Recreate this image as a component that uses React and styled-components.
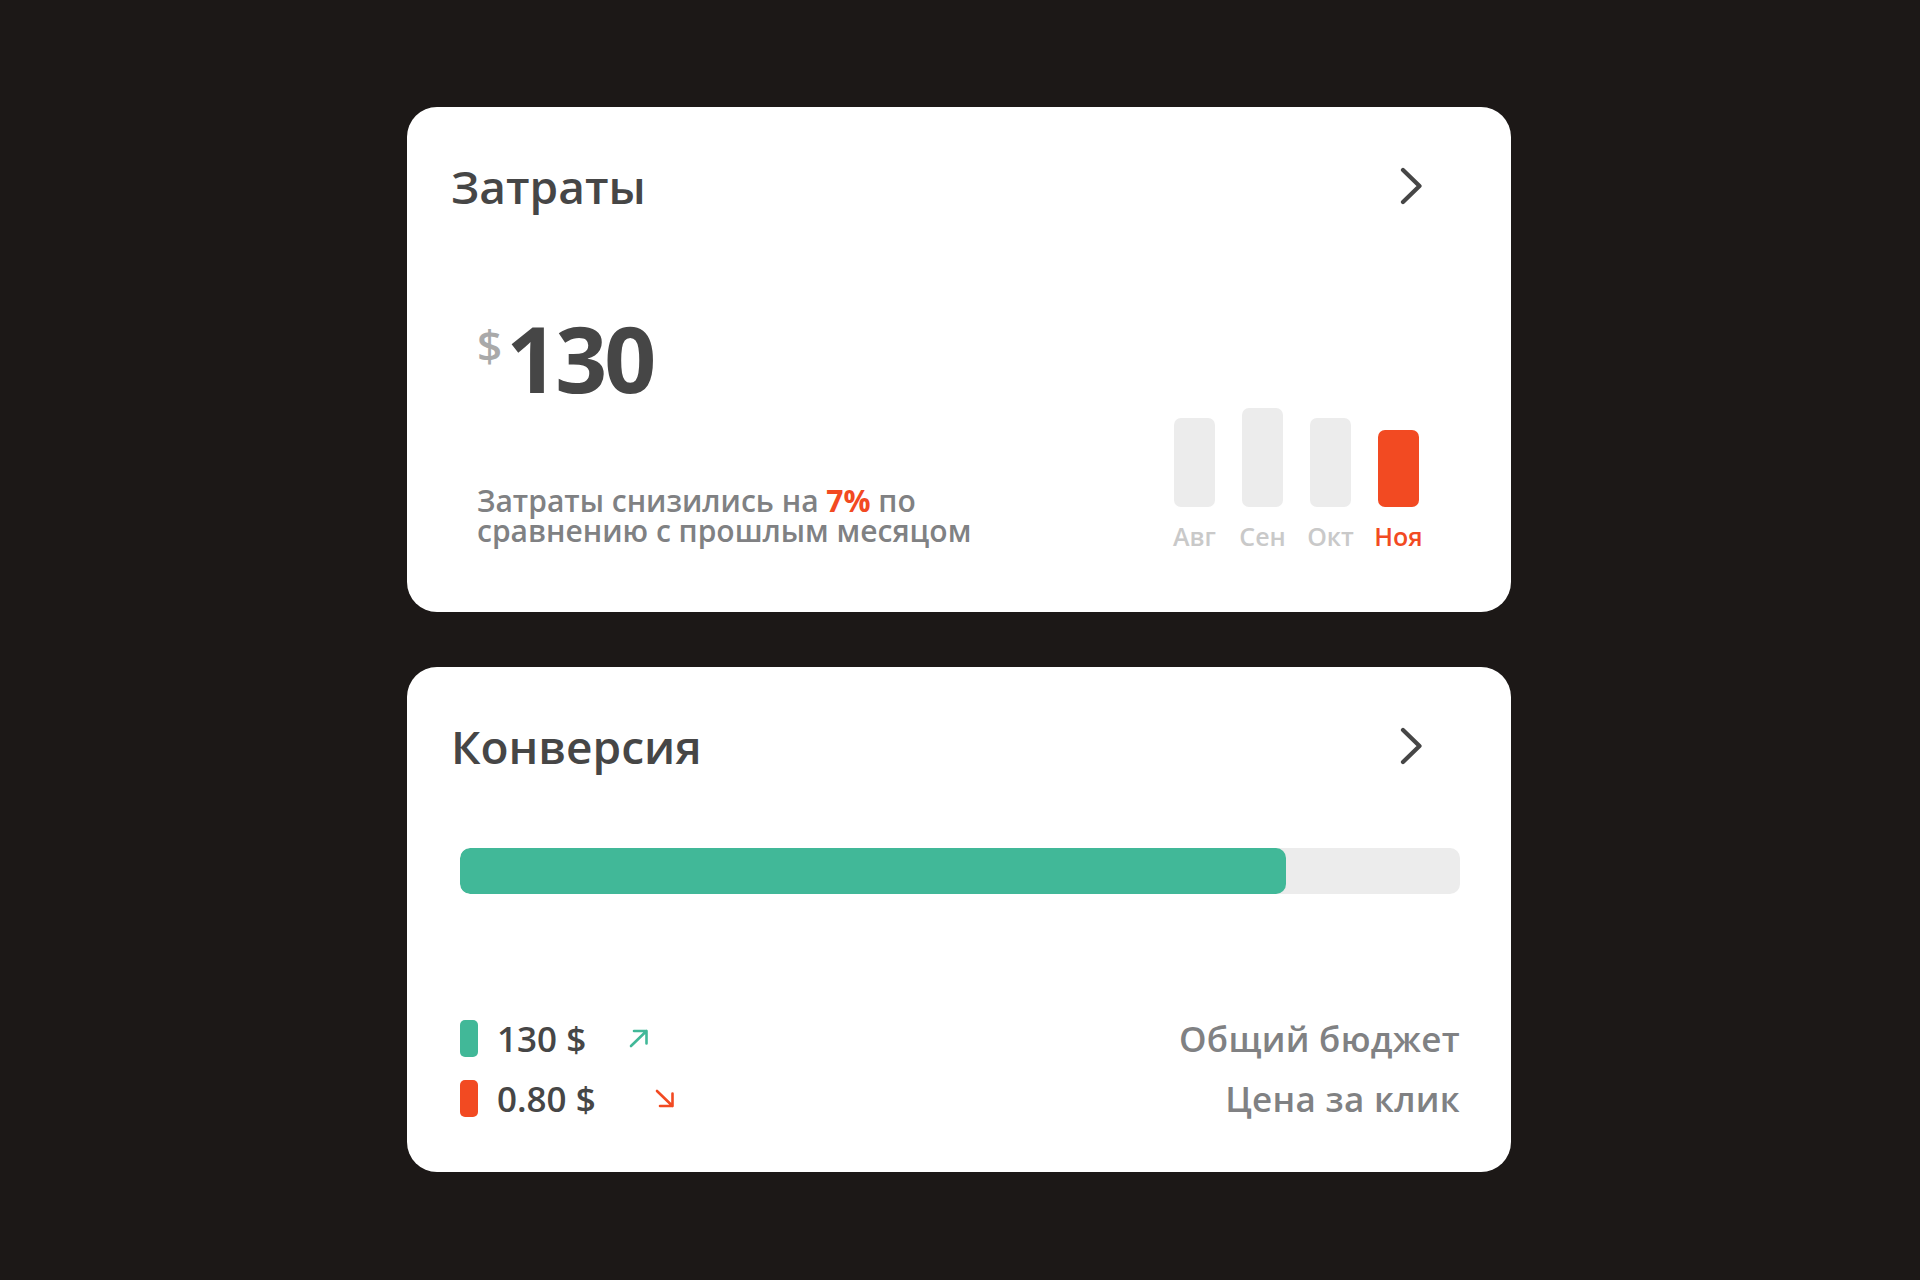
import React from 'react';
import styled, { createGlobalStyle } from 'styled-components';

const colours = {
  page: '#1c1817',
  white: '#ffffff',
  ink: '#464646',
  muted: '#808183',
  faint: '#c9c9c9',
  dollar: '#a9a9a9',
  track: '#ececec',
  green: '#41b898',
  orange: '#f24a22',
};

const GlobalStyle = createGlobalStyle`
  html, body {
    margin: 0;
    padding: 0;
    background: ${ colours.page };
  }

  body {
    font-family: "Open Sans", "Noto Sans", sans-serif;
  }
`;

const Page = styled.div`
  min-height: 1280px;
  display: flex;
  flex-direction: column;
  align-items: center;
  padding-top: 107px;
  padding-right: 2px;
  gap: 55px;
  box-sizing: border-box;
`;

const Card = styled.section`
  width: 1104px;
  height: 505px;
  box-sizing: border-box;
  background: ${ colours.white };
  border-radius: 30px;
  padding: 52px 51px 0 44px;
  display: flex;
  flex-direction: column;
`;

const Header = styled.header`
  display: flex;
  align-items: center;
  justify-content: space-between;
  padding-right: 38px;
`;

const Title = styled.h2`
  margin: 0;
  font-size: 46px;
  line-height: 54px;
  font-weight: 600;
  color: ${ colours.ink };
`;

const Chevron = () => (
  <svg width="22" height="38" viewBox="0 0 22 38" fill="none">
    <path d="M3 3 L19.5 19 L3 35" stroke={ colours.ink } strokeWidth="4.2" strokeLinecap="round" strokeLinejoin="round" />
  </svg>
);

const SpendBody = styled.div`
  display: flex;
  justify-content: space-between;
  align-items: flex-end;
  padding: 0 41px 0 26px;
`;

const SpendInfo = styled.div`
  display: flex;
  flex-direction: column;
  padding-bottom: 6px;
`;

const Amount = styled.div`
  display: flex;
  align-items: flex-start;
  margin-top: 100px;
  height: 91px;
`;

const Currency = styled.span`
  font-size: 44px;
  line-height: 44px;
  font-weight: 600;
  color: ${ colours.dollar };
  margin-top: 10px;
  margin-right: 4px;
`;

const BigNumber = styled.span`
  font-size: 91px;
  line-height: 91px;
  font-weight: 700;
  letter-spacing: -3px;
  color: ${ colours.ink };
`;

const Description = styled.p`
  margin: 82px 0 0;
  font-size: 30px;
  line-height: 30px;
  font-weight: 600;
  color: ${ colours.muted };
`;

const Accent = styled.b`
  font-weight: 700;
  color: ${ colours.orange };
`;

const Chart = styled.div`
  display: flex;
  align-items: flex-end;
  gap: 27px;
`;

const Column = styled.div`
  width: 41px;
  display: flex;
  flex-direction: column;
  align-items: center;
`;

const Bar = styled.div`
  width: 41px;
  border-radius: 7px;
  background: ${ p => p.active ? colours.orange : colours.track };
`;

const Month = styled.span`
  margin-top: 14px;
  font-size: 25px;
  line-height: 31px;
  font-weight: 600;
  white-space: nowrap;
  color: ${ p => p.active ? colours.orange : colours.faint };
`;

const Track = styled.div`
  margin: 75px 0 0 9px;
  height: 46px;
  border-radius: 10px;
  background: ${ colours.track };
  overflow: hidden;
`;

const Fill = styled.div`
  height: 100%;
  border-radius: 10px;
  background: ${ colours.green };
`;

const Legend = styled.div`
  margin: 126px 0 0 9px;
  display: flex;
  flex-direction: column;
  gap: 23px;
`;

const LegendRow = styled.div`
  display: flex;
  align-items: center;
  justify-content: space-between;
  height: 37px;
`;

const LegendValue = styled.div`
  display: flex;
  align-items: center;
`;

const Marker = styled.span`
  width: 18px;
  height: 37px;
  border-radius: 5px;
  background: ${ p => p.colour };
`;

const Value = styled.span`
  margin-left: 19px;
  font-size: 35px;
  line-height: 37px;
  font-weight: 600;
  color: ${ colours.ink };
`;

const Trend = styled.span`
  display: flex;
  margin-left: ${ p => p.offset }px;
`;

const LegendLabel = styled.span`
  font-size: 35px;
  line-height: 37px;
  font-weight: 600;
  letter-spacing: 0.3px;
  color: ${ colours.muted };
`;

const ArrowUp = () => (
  <svg width="20" height="19" viewBox="0 0 20 19" fill="none">
    <path d="M2 17 L17.5 2 M5 2 H17.5 V14.5" stroke={ colours.green } strokeWidth="2.6" strokeLinecap="round" strokeLinejoin="round" />
  </svg>
);

const ArrowDown = () => (
  <svg width="20" height="19" viewBox="0 0 20 19" fill="none">
    <path d="M2 2 L17.5 17 M5 17 H17.5 V4.5" stroke={ colours.orange } strokeWidth="2.6" strokeLinecap="round" strokeLinejoin="round" />
  </svg>
);

const months = [
  { label: 'Авг', height: 89 },
  { label: 'Сен', height: 99 },
  { label: 'Окт', height: 89 },
  { label: 'Ноя', height: 77, active: true },
];

export default class App extends React.Component {
  renderSpend = () => {
    return (
      <Card>
        <Header>
          <Title>Затраты</Title>
          <Chevron />
        </Header>
        <SpendBody>
          <SpendInfo>
            <Amount>
              <Currency>$</Currency>
              <BigNumber>130</BigNumber>
            </Amount>
            <Description>
              Затраты снизились на <Accent>7%</Accent> по<br />
              сравнению с прошлым месяцом
            </Description>
          </SpendInfo>
          <Chart>
            { months.map( m => (
              <Column key={ m.label }>
                <Bar active={ m.active } style={{ height: m.height }} />
                <Month active={ m.active }>{ m.label }</Month>
              </Column>
            )) }
          </Chart>
        </SpendBody>
      </Card>
    );
  }

  renderConversion = () => {
    return (
      <Card>
        <Header>
          <Title>Конверсия</Title>
          <Chevron />
        </Header>
        <Track>
          <Fill style={{ width: '82.6%' }} />
        </Track>
        <Legend>
          <LegendRow>
            <LegendValue>
              <Marker colour={ colours.green } />
              <Value>130 $</Value>
              <Trend offset={ 43 }><ArrowUp /></Trend>
            </LegendValue>
            <LegendLabel>Общий бюджет</LegendLabel>
          </LegendRow>
          <LegendRow>
            <LegendValue>
              <Marker colour={ colours.orange } />
              <Value>0.80 $</Value>
              <Trend offset={ 59 }><ArrowDown /></Trend>
            </LegendValue>
            <LegendLabel>Цена за клик</LegendLabel>
          </LegendRow>
        </Legend>
      </Card>
    );
  }

  render() {
    return (
      <Page>
        <GlobalStyle />
        { this.renderSpend() }
        { this.renderConversion() }
      </Page>
    );
  }
}
